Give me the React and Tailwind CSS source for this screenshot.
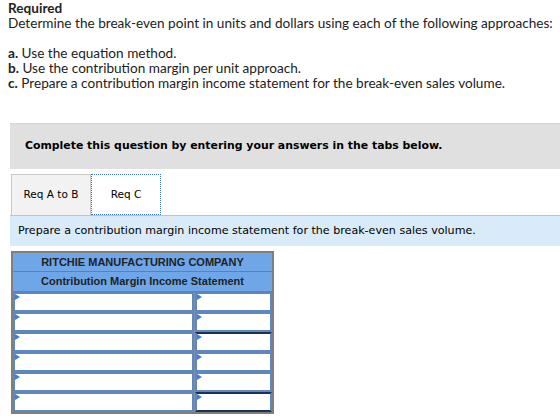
import React from "react";

function Tri() {
  return (
    <span className="absolute left-0 top-0 w-0 h-0 border-t-[3px] border-b-[3px] border-l-[5px] border-t-transparent border-b-transparent border-l-[#3f7fd8]" />
  );
}

function Row({ topDark, bottomDouble }) {
  return (
    <div className="flex h-[20px] bg-[#7f8fa6]">
      <div className="relative w-[181px] bg-white border-2 border-[#5e86bf] mr-px">
        <Tri />
      </div>
      <div
        className={
          "relative flex-1 bg-white border-2 border-[#5e86bf] " +
          (topDark ? "border-t-[#1c2f55] " : "") +
          (bottomDouble ? "border-b-[#1c2f55] " : "")
        }
      >
        <Tri />
      </div>
    </div>
  );
}

export default function App() {
  return (
    <div className="w-[560px] h-[420px] bg-white overflow-hidden relative">
      <div className="pl-[8px] pt-[1px] text-[13.6px] leading-[15px] text-[#222] font-['Lato',sans-serif]">
        <div className="font-bold">Required</div>
        <div>Determine the break-even point in units and dollars using each of the following approaches:</div>
        <div className="h-[15px]" />
        <div><span className="font-bold">a.</span> Use the equation method.</div>
        <div><span className="font-bold">b.</span> Use the contribution margin per unit approach.</div>
        <div><span className="font-bold">c.</span> Prepare a contribution margin income statement for the break-even sales volume.</div>
      </div>

      <div className="ml-[10px] mt-[32px] h-[46px] bg-[#e0e0e0] border-t border-[#d6d6d6] flex items-center pl-[15px] font-['DejaVu_Sans',Verdana,sans-serif] font-bold text-[10.9px] text-black">
        Complete this question by entering your answers in the tabs below.
      </div>

      <div className="ml-[11px] mt-[5px] flex h-[41px] font-['DejaVu_Sans',Verdana,sans-serif] text-[10.5px] text-black">
        <div className="w-[80px] bg-[#f2f2f2] border border-b-0 border-[#c8c8c8] flex items-center justify-center">
          Req A to B
        </div>
        <div className="w-[70px] bg-white border border-dotted border-[#3b73c8] flex items-center justify-center">
          Req C
        </div>
      </div>

      <div className="ml-[10px] h-[31px] bg-[#d9ebf9] border-t border-[#b8c4cf] flex items-center pl-[8px] font-['DejaVu_Sans',Verdana,sans-serif] text-[11.1px] text-black">
        Prepare a contribution margin income statement for the break-even sales volume.
      </div>

      <div className="ml-[11px] mt-[5px] w-[263px] border-2 border-[#7f7f7f] bg-[#7f7f7f] font-['Liberation_Sans',Arial,sans-serif]">
        <div className="h-[19px] bg-[#6ea6e8] flex items-center justify-center font-bold text-[11px] text-[#222] border-b border-[#5b82b8]">
          RITCHIE MANUFACTURING COMPANY
        </div>
        <div className="h-[20px] bg-[#6ea6e8] flex items-center justify-center font-bold text-[11px] text-[#222] border-b border-[#5b82b8]">
          Contribution Margin Income Statement
        </div>
        <Row />
        <Row />
        <Row topDark />
        <Row />
        <Row />
        <Row topDark bottomDouble />
      </div>
    </div>
  );
}
